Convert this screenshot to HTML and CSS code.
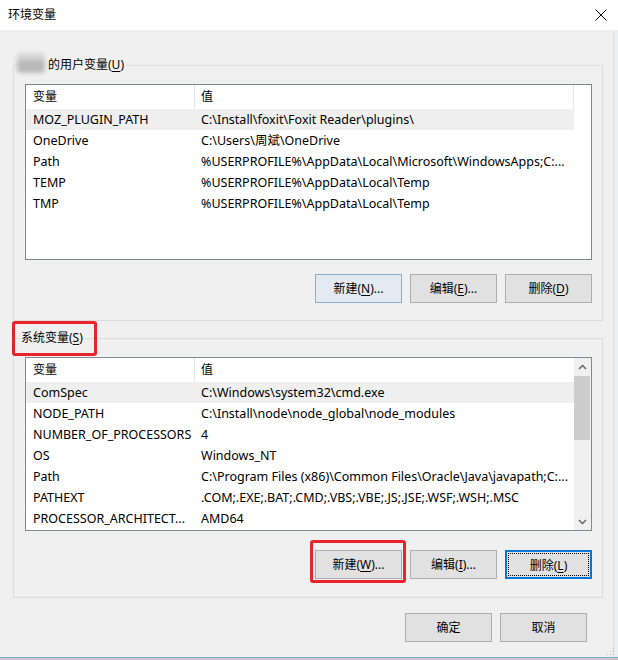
FILE: index.html
```html
<!DOCTYPE html>
<html lang="zh-CN">
<head>
<meta charset="utf-8">
<title>环境变量</title>
<link rel="stylesheet" href="styles.css">
</head>
<body>
<div class="window">
  <div class="titlebar">
    <span class="title">环境变量</span>
    <svg class="close" width="12" height="12" viewBox="0 0 12 12"><path d="M0.5 0.5L11.5 11.5M11.5 0.5L0.5 11.5" stroke="#000" stroke-width="1" fill="none"/></svg>
  </div>
  <div class="frame">
    <div class="content">
      <fieldset class="group group-user">
        <legend class="legend legend-user"><span class="blur"></span>的用户变量(<u>U</u>)</legend>
        <div class="listbox listbox-user">
          <div class="table">
            <div class="row head head-end"><span class="c1">变量</span><span class="c2">值</span></div>
            <div class="row sel"><span class="c1">MOZ_PLUGIN_PATH</span><span class="c2">C:\Install\foxit\Foxit Reader\plugins\</span></div>
            <div class="row"><span class="c1">OneDrive</span><span class="c2">C:\Users\周斌\OneDrive</span></div>
            <div class="row"><span class="c1">Path</span><span class="c2">%USERPROFILE%\AppData\Local\Microsoft\WindowsApps;C:...</span></div>
            <div class="row"><span class="c1">TEMP</span><span class="c2">%USERPROFILE%\AppData\Local\Temp</span></div>
            <div class="row"><span class="c1">TMP</span><span class="c2">%USERPROFILE%\AppData\Local\Temp</span></div>
          </div>
        </div>
        <div class="btnrow btnrow-user">
          <button class="btn btn-hot">新建(<u>N</u>)...</button>
          <button class="btn">编辑(<u>E</u>)...</button>
          <button class="btn">删除(<u>D</u>)</button>
        </div>
      </fieldset>

      <fieldset class="group group-sys">
        <legend class="legend legend-sys">系统变量(<u>S</u>)<span class="redmark redmark-legend"></span></legend>
        <div class="listbox listbox-sys">
          <div class="table">
            <div class="row head"><span class="c1">变量</span><span class="c2">值</span></div>
            <div class="row sel"><span class="c1">ComSpec</span><span class="c2">C:\Windows\system32\cmd.exe</span></div>
            <div class="row"><span class="c1">NODE_PATH</span><span class="c2">C:\Install\node\node_global\node_modules</span></div>
            <div class="row"><span class="c1">NUMBER_OF_PROCESSORS</span><span class="c2">4</span></div>
            <div class="row"><span class="c1">OS</span><span class="c2">Windows_NT</span></div>
            <div class="row"><span class="c1">Path</span><span class="c2">C:\Program Files (x86)\Common Files\Oracle\Java\javapath;C:...</span></div>
            <div class="row"><span class="c1">PATHEXT</span><span class="c2">.COM;.EXE;.BAT;.CMD;.VBS;.VBE;.JS;.JSE;.WSF;.WSH;.MSC</span></div>
            <div class="row"><span class="c1">PROCESSOR_ARCHITECT...</span><span class="c2">AMD64</span></div>
          </div>
          <div class="scrollbar">
            <div class="sb-arrow">
              <svg width="9" height="6" viewBox="0 0 9 6"><path d="M1 5L4.5 1.5L8 5" stroke="#606060" stroke-width="1.4" fill="none"/></svg>
            </div>
            <div class="sb-thumb"></div>
            <div class="sb-track"></div>
            <div class="sb-arrow">
              <svg width="9" height="6" viewBox="0 0 9 6"><path d="M1 1L4.5 4.5L8 1" stroke="#606060" stroke-width="1.4" fill="none"/></svg>
            </div>
          </div>
        </div>
        <div class="btnrow btnrow-sys">
          <button class="btn btn-marked">新建(<u>W</u>)...<span class="redmark redmark-btn"></span></button>
          <button class="btn">编辑(<u>I</u>)...</button>
          <button class="btn btn-focus">删除(<u>L</u>)</button>
        </div>
      </fieldset>

      <div class="footer">
        <button class="btn">确定</button>
        <button class="btn">取消</button>
      </div>
    </div>
    <div class="edge"></div>
    <svg class="grip" width="9" height="9" viewBox="0 0 9 9">
      <rect x="7" y="1" width="1" height="1" fill="#b4b4b4"/>
      <rect x="4" y="4" width="1" height="1" fill="#b4b4b4"/>
      <rect x="7" y="4" width="1" height="1" fill="#b4b4b4"/>
      <rect x="1" y="7" width="1" height="1" fill="#b4b4b4"/>
      <rect x="4" y="7" width="1" height="1" fill="#b4b4b4"/>
      <rect x="7" y="7" width="1" height="1" fill="#b4b4b4"/>
    </svg>
  </div>
  <div class="bottom"></div>
</div>
</body>
</html>
```

FILE: styles.css
```css
* { box-sizing: border-box; }
html, body { margin: 0; padding: 0; }
body {
  width: 618px;
  height: 660px;
  overflow: hidden;
  background: #f0f0f0;
  font-family: "Noto Sans", "Noto Sans CJK SC", sans-serif;
  font-size: 12px;
  color: #000;
}
u { text-underline-offset: 2px; }

.window { width: 618px; height: 660px; display: flex; flex-direction: column; }

.titlebar {
  flex: none;
  height: 30px;
  background: #fff;
  display: flex;
  align-items: center;
  justify-content: space-between;
  padding: 0 11px 1px 8px;
}
.title { font-size: 12px; line-height: 16px; }
.close { display: block; }

.frame { flex: none; height: 627px; display: flex; position: relative; }
.content { flex: none; width: 613px; display: flex; flex-direction: column; }
.edge { flex: 1; border-left: 1px solid #dce0e5; background: #eceef1; }
.grip { position: absolute; right: 3px; bottom: 1px; }
.bottom { flex: none; height: 3px; border-top: 1px solid #7aacc2; background: #c4c9cf; }

/* group boxes */
.group {
  margin: 0 10px 0 13px;
  padding: 10px 10px 17px 11px;
  border: 1px solid #dcdcdc;
  min-inline-size: 0;
}
.group-user { margin-top: 26px; }
.group-sys { margin-top: 8px; padding-bottom: 18px; }

.legend {
  position: relative;
  padding: 0 2px 0 0;
  margin-left: -4px;
  line-height: 18px;
  white-space: nowrap;
}
.legend-user { margin-left: -8px; }
.blur {
  display: inline-block;
  vertical-align: top;
  width: 28px;
  height: 20px;
  margin: -3px 3px 0 0;
  background: linear-gradient(#d6d6d6 0 35%, #b9b9b9 35% 100%);
  border-radius: 4px;
  filter: blur(2px);
}

.redmark {
  position: absolute;
  border: 3px solid #e8252b;
  border-radius: 3px;
  pointer-events: none;
}
.redmark-legend { left: -9px; top: -8px; width: 85px; height: 35px; }
.redmark-btn { left: -6px; top: -11px; width: 96px; height: 43px; }

/* list views */
.listbox {
  border: 1px solid #828790;
  background: #fff;
  display: flex;
  overflow: hidden;
  font-size: 12.5px;
}
.listbox-user { height: 176px; }
.listbox-sys { height: 174px; }
.table { flex: none; width: 548px; }

.row {
  display: grid;
  grid-template-columns: 169px 379px;
  height: 21px;
  line-height: 21px;
  white-space: nowrap;
}
.row > span { overflow: hidden; }
.c1 { padding-left: 7px; }
.c2 { padding-left: 6px; }
.row.head { height: 24px; line-height: 24px; font-size: 12px; }
.row.head .c1 { border-right: 1px solid #e5e5e5; }
.head-end .c2 { border-right: 1px solid #e5e5e5; }
.row.sel { background: #efefef; }

.scrollbar {
  flex: none;
  width: 17px;
  background: #f0f0f0;
  display: flex;
  flex-direction: column;
}
.sb-arrow {
  flex: none;
  height: 17px;
  display: flex;
  align-items: center;
  justify-content: center;
}
.sb-arrow svg { display: block; }
.sb-thumb { flex: none; height: 64px; margin: 1px 1px 0 0; background: #cdcdcd; }
.sb-track { flex: 1; }

/* buttons */
.btnrow { display: flex; justify-content: flex-end; gap: 8px; }
.btnrow-user { margin-top: 14px; }
.btnrow-sys { margin-top: 19px; }

.btn {
  position: relative;
  width: 87px;
  height: 29px;
  padding: 0;
  border: 1px solid #adadad;
  background: #e1e1e1;
  font: inherit;
  color: #000;
  line-height: 27px;
  white-space: nowrap;
}
.btn-hot { border-color: #8aaed2; background: #e4eaf1; }
.btn-focus { border: 2px solid #0078d7; }
.btn-focus::after {
  content: "";
  position: absolute;
  inset: 1px;
  border: 1px dotted #000;
}

.footer {
  display: flex;
  justify-content: flex-end;
  gap: 8px;
  margin-top: 15px;
  padding-right: 26px;
}
```
